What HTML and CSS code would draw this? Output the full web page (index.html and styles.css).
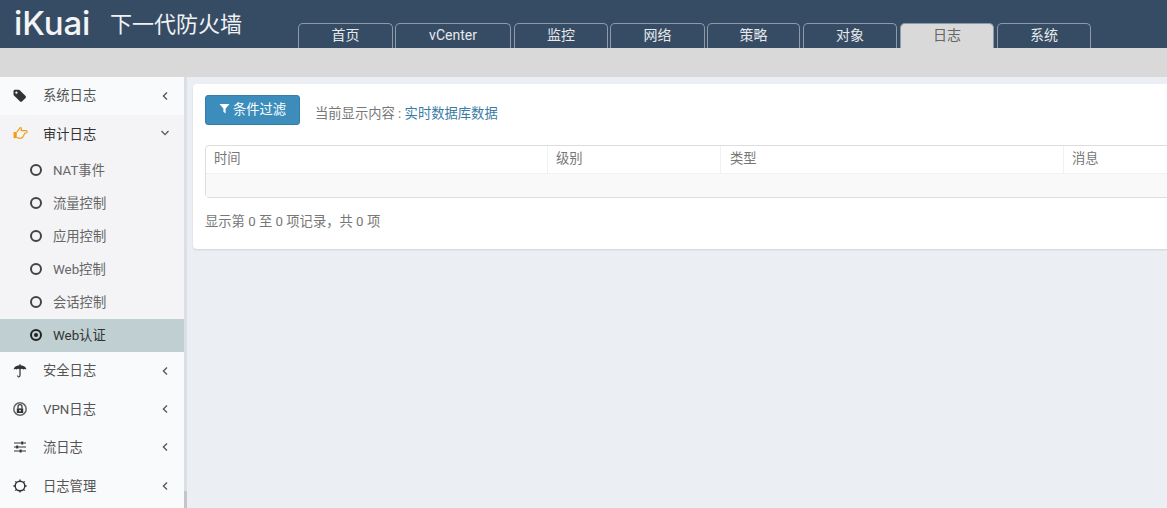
FILE: index.html
```html
<!DOCTYPE html>
<html lang="zh">
<head>
<meta charset="utf-8">
<title>iKuai</title>
<link rel="stylesheet" href="styles.css">
</head>
<body>
<header class="topbar">
  <div class="logo">iKuai</div>
  <div class="product">下一代防火墙</div>
  <nav class="tabs">
    <a class="tab t95">首页</a>
    <a class="tab t116">vCenter</a>
    <a class="tab t94">监控</a>
    <a class="tab t95">网络</a>
    <a class="tab t93 wide">策略</a>
    <a class="tab t94 wide">对象</a>
    <a class="tab t94 wide active">日志</a>
    <a class="tab t94">系统</a>
  </nav>
</header>
<div class="subbar"></div>
<div class="layout">
  <aside class="sidebar">
    <div class="item h38">
      <svg class="ico" viewBox="0 0 14 14"><path d="M0.5 2.2 Q0.5 0.8 2 0.8 L5.6 0.8 Q6.3 0.8 6.8 1.3 L12.6 7.1 Q13.4 8 12.6 8.9 L8.9 12.6 Q8 13.4 7.1 12.6 L1.2 6.8 Q0.5 6.2 0.5 5.5 Z" fill="#333"/><circle cx="3.4" cy="3.7" r="1.1" fill="#f9fafc"/></svg>
      <span class="label">系统日志</span>
      <svg class="chev" viewBox="0 0 8 10"><path d="M6 1.5 2.4 5 6 8.5" fill="none" stroke="#555" stroke-width="1.3"/></svg>
    </div>
    <div class="group">
      <div class="item h37 open">
        <svg class="ico hand" viewBox="0 0 16 14"><path d="M4 6 L7.5 1.5 Q8.5 1 9 2 L8.6 4.4 H14 Q15.3 4.6 15 6 Q14.8 7 13.6 7 H12.6 Q12.6 8.4 11.6 8.8 Q11.6 10.2 10.6 10.6 Q10.4 12.5 8.6 12.5 H6 Q5 12.5 4 11.6" fill="none" stroke="#f39c12" stroke-width="1.2" stroke-linejoin="round"/><path d="M0.6 6 H4 V12.5 H0.6 Z" fill="#f39c12"/></svg>
        <span class="label dark">审计日志</span>
        <svg class="chev" viewBox="0 0 10 8"><path d="M1.5 2 5 5.6 8.5 2" fill="none" stroke="#555" stroke-width="1.3"/></svg>
      </div>
      <div class="sub first"><i class="ring"></i><span>NAT事件</span></div>
      <div class="sub"><i class="ring"></i><span>流量控制</span></div>
      <div class="sub"><i class="ring"></i><span>应用控制</span></div>
      <div class="sub"><i class="ring"></i><span>Web控制</span></div>
      <div class="sub"><i class="ring"></i><span>会话控制</span></div>
      <div class="sub current"><i class="ring on"></i><span>Web认证</span></div>
    </div>
    <div class="item h38">
      <svg class="ico" viewBox="0 0 14 14"><path d="M0.5 5.6 Q1.5 1.6 6.4 1.2 V0.3 H7.6 V1.2 Q12.5 1.6 13.5 5.6 Q12 4.4 10.4 5.4 Q8.8 4.2 7.6 5.3 V11.4 Q7.4 13.5 5.6 13.5 Q4 13.3 4 11.6 H5 Q5.2 12.5 5.8 12.4 Q6.4 12.3 6.4 11.4 V5.3 Q5.2 4.2 3.6 5.4 Q2 4.4 0.5 5.6 Z" fill="#333"/></svg>
      <span class="label">安全日志</span>
      <svg class="chev" viewBox="0 0 8 10"><path d="M6 1.5 2.4 5 6 8.5" fill="none" stroke="#555" stroke-width="1.3"/></svg>
    </div>
    <div class="item h38">
      <svg class="ico" viewBox="0 0 14 14"><circle cx="7" cy="7" r="6.2" fill="none" stroke="#666" stroke-width="1.5"/><path d="M3.8 6.4 H10.2 V11 H3.8 Z" fill="#333"/><path d="M5 6.4 V4.6 Q5 2.6 7 2.6 Q9 2.6 9 4.6 V6.4" fill="none" stroke="#333" stroke-width="1.2"/><circle cx="7" cy="8.6" r="0.9" fill="#f9fafc"/></svg>
      <span class="label low">VPN日志</span>
      <svg class="chev" viewBox="0 0 8 10"><path d="M6 1.5 2.4 5 6 8.5" fill="none" stroke="#555" stroke-width="1.3"/></svg>
    </div>
    <div class="item h39">
      <svg class="ico" viewBox="0 0 14 14"><path d="M1 3 H13 M1 7 H13 M1 11 H13" stroke="#333" stroke-width="1.1"/><path d="M8.2 1.5 H10.2 V4.5 H8.2 Z M3.2 5.5 H5.2 V8.5 H3.2 Z M6.6 9.5 H8.6 V12.5 H6.6 Z" fill="#333"/></svg>
      <span class="label">流日志</span>
      <svg class="chev" viewBox="0 0 8 10"><path d="M6 1.5 2.4 5 6 8.5" fill="none" stroke="#555" stroke-width="1.3"/></svg>
    </div>
    <div class="item h38">
      <svg class="ico" viewBox="0 0 14 14"><circle cx="7" cy="7" r="4.8" fill="none" stroke="#333" stroke-width="1.4"/><path d="M7 0.4 V2.4 M7 11.6 V13.6 M0.4 7 H2.4 M11.6 7 H13.6 M2.4 2.4 3.7 3.7 M10.3 10.3 11.6 11.6 M2.4 11.6 3.7 10.3 M10.3 3.7 11.6 2.4" stroke="#333" stroke-width="1.3"/></svg>
      <span class="label low">日志管理</span>
      <svg class="chev" viewBox="0 0 8 10"><path d="M6 1.5 2.4 5 6 8.5" fill="none" stroke="#555" stroke-width="1.3"/></svg>
    </div>
    <div class="thumb"></div>
  </aside>
  <main class="main">
    <section class="card">
      <div class="toolbar">
        <button class="btn">
          <svg class="funnel" viewBox="0 0 12 12"><path d="M0.5 1 H11.5 L7.2 6 V11.5 L4.8 9.6 V6 Z" fill="#fff"/></svg>条件过滤
        </button>
        <div class="status">当前显示内容 : <span class="link">实时数据库数据</span></div>
      </div>
      <div class="tbl">
        <div class="thead">
          <div class="th c1">时间</div>
          <div class="th c2">级别</div>
          <div class="th c3">类型</div>
          <div class="th c4">消息</div>
        </div>
        <div class="tempty"></div>
      </div>
      <div class="info">显示第 0 至 0 项记录，共 0 项</div>
    </section>
  </main>
</div>
</body>
</html>
```
FILE: styles.css
```css
* { box-sizing: border-box; }
html, body { margin: 0; padding: 0; height: 508px; overflow: hidden; }
body {
  font-family: "Roboto", "Noto Sans CJK SC", sans-serif;
  font-size: 13.3px;
  color: #666;
  background: #ebeef3;
}
.topbar {
  height: 48px;
  background: #364c64;
  display: flex;
  align-items: flex-start;
}
.logo {
  font-family: "Inter", sans-serif;
  font-weight: 500;
  font-size: 33px;
  line-height: 40px;
  color: #f2f4f6;
  margin: 3px 0 0 14px;
  width: 96px;
  letter-spacing: -0.1px;
}
.product {
  font-family: "Noto Sans CJK SC", sans-serif;
  font-size: 22px;
  line-height: 30px;
  color: #f0f2f4;
  margin-top: 7px;
  width: 188px;
}
.tabs { display: flex; align-self: flex-end; gap: 2px; }
.tab {
  height: 25px;
  border: 1px solid #8e9aa8;
  border-bottom: 0;
  border-radius: 5px 5px 0 0;
  color: #e6e9ec;
  text-align: center;
  line-height: 23px;
  font-size: 14px;
}
.tab.active { background: #d9d9d9; color: #666; }
.t95 { width: 95px; }
.t116 { width: 116px; margin-right: 1px; }
.t94 { width: 94px; }
.t93 { width: 93px; }
.wide { margin-right: 1px; }
.subbar { height: 29px; background: #d9d9d9; }
.layout { display: flex; height: 431px; }
.sidebar {
  width: 187px;
  flex: none;
  background: #f9fafc;
  border-right: 3px solid #dcdfe5;
  position: relative;
}
.thumb {
  position: absolute;
  right: -3px;
  top: 414px;
  width: 3px;
  height: 17px;
  background: #c4c6ca;
}
.item { display: flex; align-items: center; padding-left: 13px; color: #555; }
.h38 { height: 38px; }
.h37 { height: 37px; }
.h39 { height: 39px; }
.ico { width: 14px; height: 14px; flex: none; margin-top: -1px; }
.hand { width: 15px; margin-right: -1px; }
.label { margin-left: 16px; flex: 1; padding-bottom: 3px; }
.label.dark { color: #333; padding-bottom: 1px; }
.label.low { padding-bottom: 1px; }
.chev { width: 8px; height: 10px; flex: none; margin-right: 15px; margin-top: -1px; }
.open .chev { width: 10px; height: 8px; margin-right: 14px; }
.group { background: #f4f4f7; }
.sub {
  height: 33px;
  display: flex;
  align-items: center;
  padding-left: 30px;
  color: #666;
}
.sub span { margin-left: 11px; padding-bottom: 2px; }
.ring {
  width: 12px;
  height: 12px;
  border: 2px solid #444;
  border-radius: 50%;
  flex: none;
  margin-top: -1px;
}
.sub.first { margin-top: 2px; }
.current { background: #c0d0d2; color: #333; }
.ring.on { border-color: #222; position: relative; }
.ring.on::after {
  content: "";
  position: absolute;
  left: 2px;
  top: 2px;
  width: 4px;
  height: 4px;
  border-radius: 50%;
  background: #222;
}
.main { flex: 1; min-width: 0; overflow: hidden; padding: 7px 0 0 6px; }
.card {
  width: 1000px;
  height: 165px;
  background: #fff;
  border-radius: 4px;
  box-shadow: 0 1px 2px rgba(0, 0, 0, 0.12);
  padding: 11px 12px;
}
.toolbar { display: flex; height: 30px; }
.btn {
  width: 95px;
  height: 30px;
  background: #3c8dbc;
  border: 1px solid #367fa9;
  border-radius: 3px;
  color: #fff;
  font: inherit;
  padding: 0 0 4px;
  display: flex;
  align-items: center;
  justify-content: center;
  gap: 3px;
}
.funnel { width: 11px; height: 11px; }
.status { margin: 10px 0 0 15px; line-height: 18px; color: #777; }
.link { color: #3a7ca5; }
.tbl {
  margin-top: 20px;
  width: 1020px;
  height: 53px;
  border: 1px solid #ddd;
  border-radius: 4px 0 0 4px;
}
.thead { display: flex; height: 28px; border-bottom: 1px solid #f1f1f1; }
.th { padding-left: 8px; line-height: 25px; color: #777; border-right: 1px solid #f1f1f1; flex: none; }
.c1 { width: 342px; }
.c2 { width: 173px; }
.c3 { width: 343px; padding-left: 9px; }
.c4 { width: 172px; border-right: 0; }
.tempty { height: 23px; background: #f9f9f9; }
.info { margin-top: 14px; line-height: 20px; color: #777; }
```
